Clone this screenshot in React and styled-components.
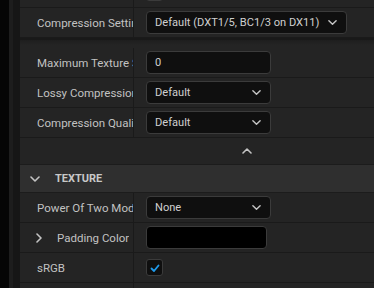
import React from 'react'
import styled, { createGlobalStyle } from 'styled-components'

const Global = createGlobalStyle`
  html, body {
    margin: 0;
    padding: 0;
    background: #242424;
    font-family: Roboto, "Liberation Sans", sans-serif;
    overflow: hidden;
  }
`

const Page = styled.div`
  display: flex;
  height: 288px;
  overflow: hidden;
`

const Gutter = styled.div`
  box-sizing: border-box;
  width: 20px;
  flex: none;
  border-left: 9px solid #050505;
  background: linear-gradient(to right, #1d1d1d 0 4px, #161616 4px);
`

const Panel = styled.div`
  flex: 1;
  display: flex;
  flex-direction: column;
  margin-top: -22px;
  min-width: 0;
`

const Row = styled.div`
  box-sizing: border-box;
  height: 30px;
  flex: none;
  display: grid;
  grid-template-columns: 114px 1fr;
  border-bottom: 1px solid #1a1a1a;
`

const Name = styled.div`
  display: flex;
  align-items: center;
  gap: 13px;
  padding-left: ${p => (p.$indent ? 14 : 17)}px;
  border-right: 1px solid #1a1a1a;
  color: #c2c2c2;
  font-size: 11.5px;
  white-space: nowrap;
  overflow: hidden;
`

const Label = styled.span`
  overflow: hidden;
  text-overflow: clip;
`

const Value = styled.div`
  display: flex;
  align-items: center;
  padding-left: 12px;
`

const Field = styled.div`
  box-sizing: border-box;
  width: ${p => p.$w}px;
  height: 23px;
  display: flex;
  align-items: center;
  justify-content: space-between;
  padding: 0 9px 0 8px;
  background: ${p => (p.$black ? '#000' : '#0f0f0f')};
  border: 1px solid #3b3b3b;
  border-radius: 4px;
  color: #cfcfcf;
  font-size: 11.1px;
  white-space: nowrap;
`

const Check = styled.div`
  box-sizing: border-box;
  width: 17px;
  height: 17px;
  display: flex;
  align-items: center;
  justify-content: center;
  background: #0f0f0f;
  border: 1px solid #3b3b3b;
  border-radius: 3px;
`

const SectionEnd = styled.div`
  flex: none;
  height: 10px;
  border-top: 2px solid #191919;
  box-sizing: border-box;
  background: linear-gradient(#1e1e1e, #242424 5px);
`

const ExpandRow = styled.div`
  flex: none;
  height: 26px;
  display: flex;
  align-items: center;
  padding-left: 222px;
`

const Header = styled.div`
  box-sizing: border-box;
  flex: none;
  height: 29px;
  display: flex;
  align-items: center;
  gap: 15px;
  padding-left: 10px;
  background: #2f2f2f;
  border-top: 1px solid #1c1c1c;
  border-bottom: 1px solid #1c1c1c;
  color: #c8c8c8;
  font-size: 11px;
  font-weight: 700;
`

const Chevron = ({ dir = 'down', size = 9 }) => {
  const paths = {
    down: 'M1 3 L5 7 L9 3',
    up: 'M1 7 L5 3 L9 7',
    right: 'M3 1 L7 5 L3 9',
  }
  return (
    <svg width={size} height={size} viewBox="0 0 10 10">
      <path d={paths[dir]} fill="none" stroke="#c4c4c4" strokeWidth="1.6" strokeLinecap="round" strokeLinejoin="round" />
    </svg>
  )
}

const Dropdown = ({ w, children }) => (
  <Field $w={w}>
    <span>{children}</span>
    <Chevron />
  </Field>
)

const Tick = () => (
  <svg width="10" height="10" viewBox="0 0 10 10">
    <path d="M1.5 5.5 L4 8 L8.5 2.5" fill="none" stroke="#1f9bec" strokeWidth="1.8" strokeLinecap="round" strokeLinejoin="round" />
  </svg>
)

export default function App() {
  return (
    <>
      <Global />
      <Page>
        <Gutter />
        <Panel>
          <Row>
            <Name />
            <Value><Check /></Value>
          </Row>
          <Row>
            <Name><Label>Compression Settings</Label></Name>
            <Value><Dropdown w={201}>Default (DXT1/5, BC1/3 on DX11)</Dropdown></Value>
          </Row>
          <SectionEnd />
          <Row>
            <Name><Label>Maximum Texture Size</Label></Name>
            <Value><Field $w={125}>0</Field></Value>
          </Row>
          <Row>
            <Name><Label>Lossy Compression Amount</Label></Name>
            <Value><Dropdown w={125}>Default</Dropdown></Value>
          </Row>
          <Row>
            <Name><Label>Compression Quality</Label></Name>
            <Value><Dropdown w={125}>Default</Dropdown></Value>
          </Row>
          <ExpandRow><Chevron dir="up" size={10} /></ExpandRow>
          <Header>
            <Chevron size={10} />
            TEXTURE
          </Header>
          <Row>
            <Name><Label>Power Of Two Mode</Label></Name>
            <Value><Dropdown w={125}>None</Dropdown></Value>
          </Row>
          <Row>
            <Name $indent><Chevron dir="right" size={10} /><Label>Padding Color</Label></Name>
            <Value><Field $w={121} $black /></Value>
          </Row>
          <Row>
            <Name><Label>sRGB</Label></Name>
            <Value><Check><Tick /></Check></Value>
          </Row>
          <Row>
            <Name />
            <Value />
          </Row>
        </Panel>
      </Page>
    </>
  )
}
